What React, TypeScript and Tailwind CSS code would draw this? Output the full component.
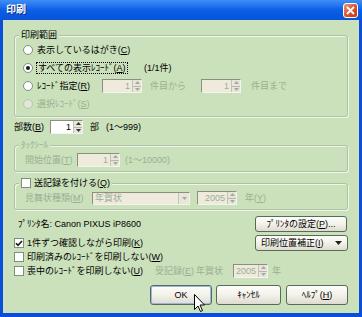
import React from "react";

const DIS = "text-[#9dad94]";

function Radio({ checked = false, disabled = false }: { checked?: boolean; disabled?: boolean }) {
  return (
    <span
      className={`flex h-[10px] w-[10px] shrink-0 items-center justify-center rounded-full border ${
        disabled ? "border-[#b9c6ae] bg-[#dfe8d6]" : "border-[#7f8f7d] bg-white"
      }`}
    >
      {checked && <span className="h-[4px] w-[4px] rounded-full bg-[#1a1a1a]" />}
    </span>
  );
}

function Check({ checked = false }: { checked?: boolean }) {
  return (
    <span className="flex h-[10px] w-[10px] shrink-0 items-center justify-center border border-[#7f8f7d] bg-white">
      {checked && (
        <svg width="8" height="7" viewBox="0 0 8 7">
          <path d="M1 3.2 L3 5.4 L7 1" stroke="#1a1a1a" strokeWidth="1.6" fill="none" />
        </svg>
      )}
    </span>
  );
}

function Arrows({ disabled }: { disabled?: boolean }) {
  const c = disabled ? "#a6a89b" : "#333";
  return (
    <div className="flex w-[9px] flex-col border-l border-[#c4c2b6] bg-[#e8e6da]">
      <div className="flex flex-1 items-center justify-center border-b border-[#b8b6aa]">
        <svg width="5" height="3" viewBox="0 0 5 3">
          <path d="M0 3 L2.5 0 L5 3Z" fill={c} />
        </svg>
      </div>
      <div className="flex flex-1 items-center justify-center">
        <svg width="5" height="3" viewBox="0 0 5 3">
          <path d="M0 0 L2.5 3 L5 0Z" fill={c} />
        </svg>
      </div>
    </div>
  );
}

function Spin({ value, className, disabled = false }: { value: string; className: string; disabled?: boolean }) {
  return (
    <div
      className={`flex h-[14px] shrink-0 border border-t-[#8d8d82] border-l-[#8d8d82] border-b-[#f4f4ee] border-r-[#f4f4ee] ${
        disabled ? "bg-[#eeebdd]" : "bg-white"
      } ${className}`}
    >
      <div className={`flex-1 pr-[2px] text-right leading-[12px] ${disabled ? DIS : "text-black"}`}>{value}</div>
      <Arrows disabled={disabled} />
    </div>
  );
}

function Btn({ children, className }: { children: React.ReactNode; className: string }) {
  return (
    <div
      className={`flex shrink-0 items-center justify-center whitespace-nowrap rounded-[3px] border border-[#5a6a5a] bg-gradient-to-b from-[#fdfdfb] via-[#f3f2ea] to-[#dedcd0] text-black ${className}`}
    >
      {children}
    </div>
  );
}

const legendCls = "ml-[4px] bg-[#cbe1bb] px-[2px] leading-[12px]";
const fsCls =
  "m-0 rounded-[3px] border border-[#b1bfa5] p-0 shadow-[inset_1px_1px_0_#eef6e8,1px_1px_0_#eef6e8]";

export default function App() {
  return (
    <div className="relative flex h-[317px] w-[362px] flex-col bg-[#0a4fd8] font-['Liberation_Sans','Noto_Sans_CJK_JP',sans-serif] text-[9px] leading-[12px] text-black">
      {/* title bar */}
      <div className="flex h-[20px] shrink-0 items-center justify-between bg-gradient-to-b from-[#3e8ef7] via-[#0b5fe6] to-[#0654da] pl-[6px] pr-[4px]">
        <span className="text-[10px] font-bold text-white [text-shadow:1px_1px_0_#0b2a8a]">印刷</span>
        <div className="flex h-[15px] w-[15px] items-center justify-center rounded-[3px] border border-white bg-gradient-to-br from-[#ec9a7e] via-[#d9542f] to-[#c1381a]">
          <svg width="9" height="9" viewBox="0 0 9 9">
            <path d="M1 1 L8 8 M8 1 L1 8" stroke="white" strokeWidth="1.8" />
          </svg>
        </div>
      </div>

      {/* body */}
      <div className="mx-[3px] mb-[4px] flex flex-1 flex-col bg-[#cbe1bb] px-[11px]">
        {/* group 1 */}
        <fieldset className={`${fsCls} mt-[9px]`}>
          <legend className={legendCls}>印刷範囲</legend>
          <div className="flex flex-col pb-[3px] pl-[8px]">
            <div className="flex h-[18px] items-center gap-[4px]">
              <Radio />
              <span>
                表示しているはがき(<u>C</u>)
              </span>
            </div>
            <div className="flex h-[18px] items-center gap-[4px]">
              <Radio checked />
              <span className="w-[103px]">
                <span className="px-[1px] outline-1 outline-dotted outline-black">
                  すべての表示ﾚｺｰﾄﾞ(<u>A</u>)
                </span>
              </span>
              <span>(1/1件)</span>
            </div>
            <div className="flex h-[18px] items-center gap-[4px]">
              <Radio />
              <span className="w-[61px]">
                ﾚｺｰﾄﾞ指定(<u>R</u>)
              </span>
              <Spin value="1" disabled className="w-[40px]" />
              <span className={`ml-[4px] w-[47px] ${DIS}`}>件目から</span>
              <Spin value="1" disabled className="w-[40px]" />
              <span className={`ml-[6px] ${DIS}`}>件目まで</span>
            </div>
            <div className="flex h-[18px] items-center gap-[4px]">
              <Radio disabled />
              <span className={DIS}>
                選択ﾚｺｰﾄﾞ(<u>S</u>)
              </span>
            </div>
          </div>
        </fieldset>

        {/* copies */}
        <div className="mt-[3px] flex h-[14px] items-center">
          <span className="w-[36px]">
            部数(<u>B</u>)
          </span>
          <Spin value="1" className="w-[33px]" />
          <span className="ml-[7px] w-[16px]">部</span>
          <span>(1〜999)</span>
        </div>

        {/* group 2 */}
        <fieldset className={`${fsCls} mt-[5px]`}>
          <legend className={`${legendCls} ${DIS}`}>ﾀｯｸｼｰﾙ</legend>
          <div className="mb-[2px] flex h-[18px] items-center pl-[10px]">
            <span className={`w-[52px] ${DIS}`}>
              開始位置(<u>T</u>)
            </span>
            <Spin value="1" disabled className="w-[43px]" />
            <span className={`ml-[5px] ${DIS}`}>(1〜10000)</span>
          </div>
        </fieldset>

        {/* group 3 */}
        <fieldset className={`${fsCls} mt-[5px]`}>
          <legend className={`${legendCls} flex items-center gap-[3px]`}>
            <Check />
            <span>
              送記録を付ける(<u>Q</u>)
            </span>
          </legend>
          <div className="mb-[2px] flex h-[18px] items-center pl-[10px]">
            <span className={`w-[67px] ${DIS}`}>
              見舞状種類(<u>M</u>)
            </span>
            <div className="flex h-[13px] w-[98px] border border-t-[#8d8d82] border-l-[#8d8d82] border-b-[#f4f4ee] border-r-[#f4f4ee] bg-[#eeebdd]">
              <span className={`flex-1 pl-[2px] leading-[11px] ${DIS}`}>年賀状</span>
              <div className="flex w-[11px] items-center justify-center border-l border-[#c4c2b6] bg-[#e8e6da]">
                <svg width="5" height="3" viewBox="0 0 5 3">
                  <path d="M0 0 L2.5 3 L5 0Z" fill="#a6a89b" />
                </svg>
              </div>
            </div>
            <Spin value="2005" disabled className="ml-[7px] w-[40px]" />
            <span className={`ml-[8px] ${DIS}`}>
              年(<u>Y</u>)
            </span>
          </div>
        </fieldset>

        {/* printer */}
        <div className="mt-[6px] flex h-[16px] items-center justify-between">
          <span className="ml-[4px]">ﾌﾟﾘﾝﾀ名: Canon PIXUS iP8600</span>
          <Btn className="mr-[1px] h-[16px] w-[92px]">
            ﾌﾟﾘﾝﾀの設定(<u>P</u>)...
          </Btn>
        </div>

        {/* checks */}
        <div className="mt-[4px] flex h-[14px] items-center justify-between">
          <div className="flex items-center gap-[3px]">
            <Check checked />
            <span>
              1件ずつ確認しながら印刷(<u>K</u>)
            </span>
          </div>
          <Btn className="h-[16px] w-[93px] pl-[5px] pr-[5px]">
            <span className="flex-1 text-left">
              印刷位置補正(<u>I</u>)
            </span>
            <svg width="7" height="4" viewBox="0 0 7 4">
              <path d="M0 0 L3.5 4 L7 0Z" fill="#222" />
            </svg>
          </Btn>
        </div>
        <div className="flex h-[14px] items-center gap-[3px]">
          <Check />
          <span>
            印刷済みのﾚｺｰﾄﾞを印刷しない(<u>W</u>)
          </span>
        </div>
        <div className="flex h-[14px] items-center">
          <Check />
          <span className="ml-[3px] w-[128px]">
            喪中のﾚｺｰﾄﾞを印刷しない(<u>U</u>)
          </span>
          <span className={`w-[41px] ${DIS}`}>
            受記録(<u>E</u>)
          </span>
          <span className={`w-[37px] ${DIS}`}>年賀状</span>
          <Spin value="2005" disabled className="h-[13px] w-[35px]" />
          <span className={`ml-[4px] ${DIS}`}>年</span>
        </div>

        {/* bottom buttons */}
        <div className="mt-[7px] flex h-[20px] justify-end">
          <Btn className="h-[20px] w-[62px] border-[#2b4a7a] shadow-[inset_0_0_0_1px_#9cb6e0]">OK</Btn>
          <Btn className="ml-[4px] h-[20px] w-[65px]">ｷｬﾝｾﾙ</Btn>
          <Btn className="ml-[5px] h-[20px] w-[62px]">
            ﾍﾙﾌﾟ(<u>H</u>)
          </Btn>
        </div>
      </div>

      {/* mouse cursor */}
      <svg className="absolute left-[194px] top-[294px]" width="12" height="19" viewBox="0 0 12 19">
        <path d="M0.5 0.5 L0.5 15.5 L4 12 L6.5 17.5 L8.5 16.6 L6 11 L10.5 11 Z" fill="white" stroke="black" strokeWidth="1" />
      </svg>
    </div>
  );
}
